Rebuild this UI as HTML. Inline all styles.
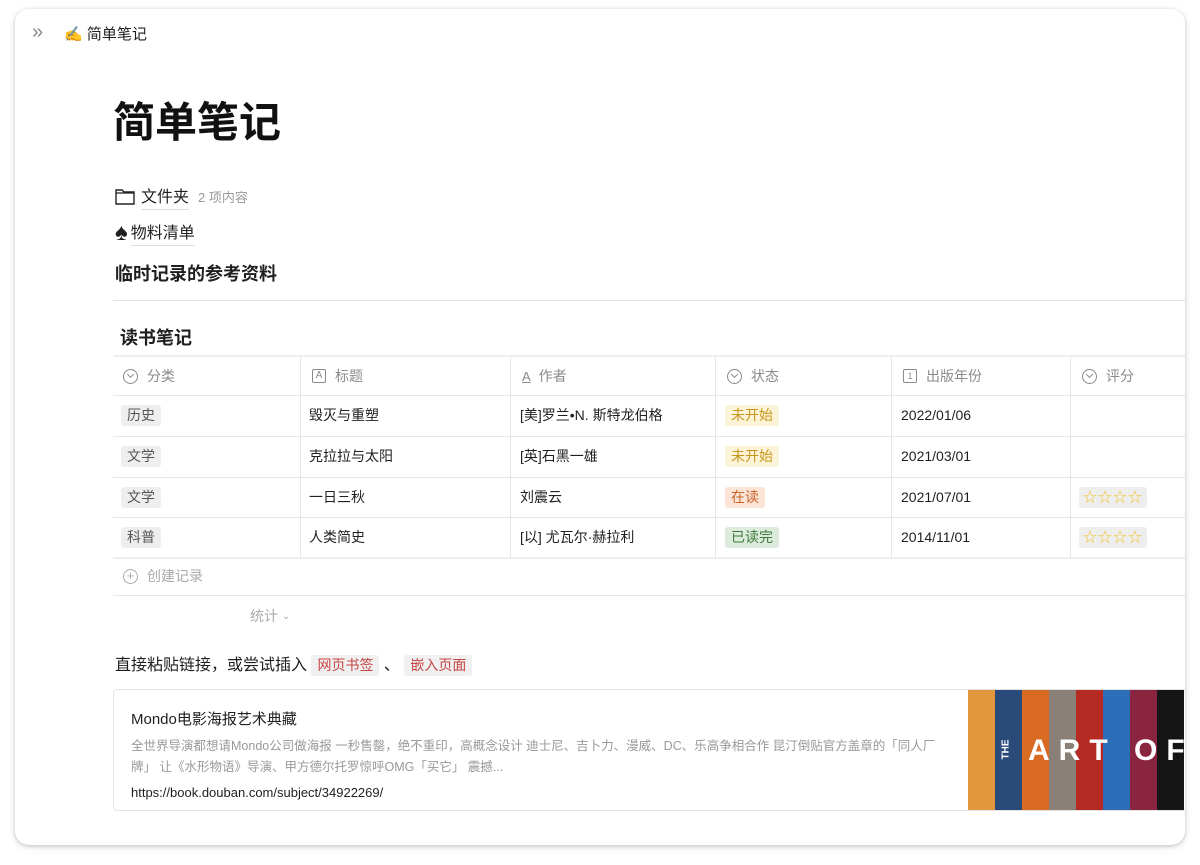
<!DOCTYPE html>
<html><head><meta charset="utf-8"><style>
*{box-sizing:border-box;margin:0;padding:0}
body{width:1200px;height:865px;background:#fff;font-family:"Liberation Sans","Noto Sans CJK SC",sans-serif;position:relative;overflow:hidden;color:#1f1f1f}
.win{position:absolute;left:15px;top:9px;width:1170px;height:836px;border-radius:14px;background:#fff;box-shadow:0 1px 4px rgba(0,0,0,.22),0 3px 12px rgba(0,0,0,.06);overflow:hidden}
.a{position:absolute;white-space:nowrap}
.tag{display:inline-block;padding:0 6px;border-radius:3px;line-height:21px;font-size:14px}
.cell{position:absolute;height:40px;display:flex;align-items:center;font-size:14px}
.hl{position:absolute;left:98px;width:1072px;height:1px;background:#e6e6e6}
.vl{position:absolute;width:1px;background:#e6e6e6;top:347px;height:202px}
.hd{color:#8a8a8a;font-size:14px}
.ic{display:inline-block;width:15px;height:15px;border:1.3px solid #8a8a8a;border-radius:50%;margin-right:9px;position:relative}
.ic.c::after{content:"";position:absolute;left:3.5px;top:2.5px;width:4px;height:4px;border-right:1.3px solid #8a8a8a;border-bottom:1.3px solid #8a8a8a;transform:rotate(45deg)}
</style></head><body>
<div class="win">
 <div class="a" style="left:17px;top:12px;font-size:20px;color:#888">»</div>
 <div class="a" style="left:49px;top:14px;font-size:15px">✍️ 简单笔记</div>
 <div class="a" style="left:98px;top:80px;font-size:42px;font-weight:bold;color:#111">简单笔记</div>
 <div class="a" style="left:100px;top:174px;font-size:16px;display:flex;align-items:center">
  <svg width="20" height="17" viewBox="0 0 20 17" style="margin-right:6px"><path d="M1 2h6l2 2h10v12H1z" fill="none" stroke="#222" stroke-width="1.4"/><path d="M1 5h18" stroke="#222" stroke-width="1.2"/></svg>
  <span style="border-bottom:1px solid #ddd;padding-bottom:2px">文件夹</span><span style="font-size:13px;color:#999;margin-left:9px">2 项内容</span></div>
 <div class="a" style="left:100px;top:210px;font-size:16px;display:flex;align-items:center"><span style="font-size:24px;margin-right:3px;line-height:24px">♠</span><span style="border-bottom:1px solid #ddd;padding-bottom:2px">物料清单</span></div>
 <div class="a" style="left:100px;top:251px;font-size:18px;font-weight:bold">临时记录的参考资料</div>
 <div class="hl" style="top:291px;background:#e3e3e3"></div>
 <div class="a" style="left:105px;top:315px;font-size:18px;font-weight:bold">读书笔记</div>
 <div class="hl" style="top:346px;height:2px;background:#eee"></div>
 <div class="hl" style="top:386px"></div><div class="hl" style="top:427px"></div><div class="hl" style="top:468px"></div><div class="hl" style="top:508px"></div><div class="hl" style="top:548px;height:2px;background:#eee"></div><div class="hl" style="top:586px"></div>
 <div class="vl" style="left:285px"></div><div class="vl" style="left:495px"></div><div class="vl" style="left:700px"></div><div class="vl" style="left:876px"></div><div class="vl" style="left:1055px"></div>
 <div class="cell hd" style="left:108px;top:347px"><span class="ic c"></span>分类</div>
 <div class="cell hd" style="left:297px;top:347px"><span style="display:inline-block;width:14px;height:14px;border:1.3px solid #8a8a8a;border-radius:2px;font-size:10px;line-height:12px;text-align:center;margin-right:9px">A</span>标题</div>
 <div class="cell hd" style="left:507px;top:347px"><span style="font-size:13px;margin-right:8px;text-decoration:underline">A</span>作者</div>
 <div class="cell hd" style="left:712px;top:347px"><span class="ic c"></span>状态</div>
 <div class="cell hd" style="left:888px;top:347px"><span style="display:inline-block;width:14px;height:14px;border:1.3px solid #8a8a8a;border-radius:2px;font-size:9px;line-height:12px;text-align:center;margin-right:9px">1</span>出版年份</div>
 <div class="cell hd" style="left:1067px;top:347px"><span class="ic c"></span>评分</div>

 <div class="cell" style="left:106px;top:386px"><span class="tag" style="background:#eee;color:#555">历史</span></div>
 <div class="cell" style="left:106px;top:427px"><span class="tag" style="background:#eee;color:#555">文学</span></div>
 <div class="cell" style="left:106px;top:468px"><span class="tag" style="background:#eee;color:#555">文学</span></div>
 <div class="cell" style="left:106px;top:508px"><span class="tag" style="background:#eee;color:#555">科普</span></div>
 <div class="cell" style="left:294px;top:386px">毁灭与重塑</div>
 <div class="cell" style="left:294px;top:427px">克拉拉与太阳</div>
 <div class="cell" style="left:294px;top:468px">一日三秋</div>
 <div class="cell" style="left:294px;top:508px">人类简史</div>
 <div class="cell" style="left:505px;top:386px">[美]罗兰•N. 斯特龙伯格</div>
 <div class="cell" style="left:505px;top:427px">[英]石黑一雄</div>
 <div class="cell" style="left:505px;top:468px">刘震云</div>
 <div class="cell" style="left:505px;top:508px">[以] 尤瓦尔·赫拉利</div>
 <div class="cell" style="left:710px;top:386px"><span class="tag" style="background:#fdf3d6;color:#c6961c">未开始</span></div>
 <div class="cell" style="left:710px;top:427px"><span class="tag" style="background:#fdf3d6;color:#c6961c">未开始</span></div>
 <div class="cell" style="left:710px;top:468px"><span class="tag" style="background:#fce4d6;color:#c8642a">在读</span></div>
 <div class="cell" style="left:710px;top:508px"><span class="tag" style="background:#dcebdc;color:#3d7a3d">已读完</span></div>
 <div class="cell" style="left:886px;top:386px">2022/01/06</div>
 <div class="cell" style="left:886px;top:427px">2021/03/01</div>
 <div class="cell" style="left:886px;top:468px">2021/07/01</div>
 <div class="cell" style="left:886px;top:508px">2014/11/01</div>
 <div class="cell" style="left:1064px;top:468px"><span class="tag" style="background:#eee;color:#f2c230;font-size:14px;letter-spacing:1px;padding:0 4px">☆☆☆☆</span></div>
 <div class="cell" style="left:1064px;top:508px"><span class="tag" style="background:#eee;color:#f2c230;font-size:14px;letter-spacing:1px;padding:0 4px">☆☆☆☆</span></div>
 <div class="cell" style="left:108px;top:548px;color:#aaa;height:38px"><span class="ic" style="border-color:#aaa;text-align:center;font-size:13px;line-height:12px">+</span>创建记录</div>
 <div class="cell" style="left:235px;top:587px;color:#aaa">统计 <span style="font-size:10px;margin-left:4px">⌄</span></div>

 <div class="a" style="left:100px;top:642px;font-size:16px">直接粘贴链接，或尝试插入 <span class="tag" style="background:#f0f0f0;color:#c74545">网页书签</span> 、 <span class="tag" style="background:#f0f0f0;color:#c74545">嵌入页面</span></div>
 <div style="position:absolute;left:98px;top:680px;width:1080px;height:122px;border:1px solid #e3e3e3;border-radius:4px;overflow:hidden">
  <div class="a" style="left:17px;top:18px;font-size:15px">Mondo电影海报艺术典藏</div>
  <div class="a" style="left:17px;top:46px;font-size:12.5px;color:#999;line-height:21px;white-space:normal;width:820px">全世界导演都想请Mondo公司做海报 一秒售罄，绝不重印，高概念设计 迪士尼、吉卜力、漫威、DC、乐高争相合作 昆汀倒贴官方盖章的「同人厂牌」 让《水形物语》导演、甲方德尔托罗惊呼OMG「买它」 震撼...</div>
  <div class="a" style="left:17px;top:95px;font-size:13px">https://book.douban.com/subject/34922269/</div>
  <div style="position:absolute;left:854px;top:0;width:216px;height:121px;display:flex">
   <div style="flex:1;background:#e2973d"></div><div style="flex:1;background:#2a4a7a"></div><div style="flex:1;background:#d86a22"></div><div style="flex:1;background:#8a8078"></div><div style="flex:1;background:#b52a23"></div><div style="flex:1;background:#2c6fb8"></div><div style="flex:1;background:#8a2540"></div><div style="flex:1;background:#151515"></div>
   <div class="a" style="left:28px;top:54px;color:#fff;font-weight:900;font-size:10px;transform:rotate(-90deg)">THE</div>
   <div class="a" style="left:60px;top:44px;color:#fff;font-weight:900;font-size:30px;letter-spacing:9px">ART OF</div>
  </div>
 </div>
</div>
</body></html>
